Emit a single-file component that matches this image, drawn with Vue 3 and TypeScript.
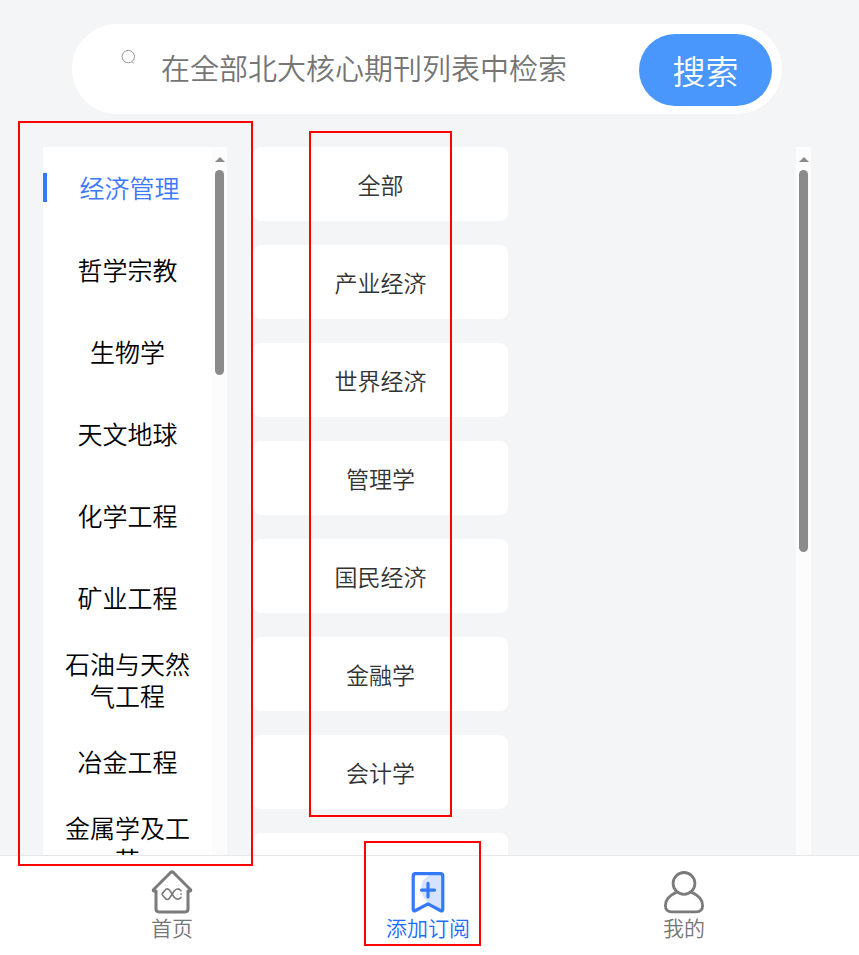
<script setup lang="ts">
import { ref } from 'vue'

const keyword = ref('')
const activeCategory = ref('经济管理')

const categories: string[] = [
  '经济管理',
  '哲学宗教',
  '生物学',
  '天文地球',
  '化学工程',
  '矿业工程',
  '石油与天然气工程',
  '冶金工程',
  '金属学及工艺',
]

const subjects: string[] = [
  '全部',
  '产业经济',
  '世界经济',
  '管理学',
  '国民经济',
  '金融学',
  '会计学',
  '',
]
</script>

<template>
  <div class="page">
    <form class="search" @submit.prevent>
      <svg class="search-icon" viewBox="0 0 16 16" aria-hidden="true">
        <circle cx="8.3" cy="7.6" r="6.2" />
        <path d="M11.8 12.4 L14.2 14.6" />
      </svg>
      <input
        v-model="keyword"
        class="search-input"
        type="text"
        placeholder="在全部北大核心期刊列表中检索"
        aria-label="在全部北大核心期刊列表中检索"
      />
      <button class="search-button" type="submit">搜索</button>
    </form>

    <main class="content">
      <aside class="sidebar">
        <ul class="categories">
          <li v-for="name in categories" :key="name" class="category">
            <button
              type="button"
              class="category-button"
              :class="{ active: name === activeCategory }"
              @click="activeCategory = name"
            >
              {{ name }}
            </button>
          </li>
        </ul>
        <div class="track">
          <span class="arrow"></span>
          <span class="thumb thumb-short"></span>
        </div>
      </aside>

      <section class="subjects">
        <div class="subject-list">
          <button v-for="name in subjects" :key="name" type="button" class="subject">
            {{ name }}
          </button>
        </div>
        <div class="track">
          <span class="arrow"></span>
          <span class="thumb thumb-long"></span>
        </div>
      </section>
    </main>

    <nav class="tabs">
      <a class="tab" href="#home">
        <svg class="tab-icon" viewBox="0 0 44 44" aria-hidden="true">
          <g fill="none" stroke="#7b7b7b" stroke-linecap="round" stroke-linejoin="round">
            <path
              stroke-width="3"
              d="M6 21.5 H3.7 Q2.8 20.9 3.6 20 L20.6 3 Q22 1.8 23.4 3 L40.4 20 Q41.2 20.9 40.3 21.5 H38 V39.5 Q38 42.4 35 42.4 H9 Q6 42.4 6 39.5 Z"
            />
            <path
              stroke-width="1.7"
              d="M31 21.2 C29 18.8 26 18.9 24.2 21.5 L19.6 28.5 C18.2 30.5 16.4 30.5 15 28.5 L12.4 25.5 Q11.8 24.7 12.4 23.9 L15 20.8 C16.4 18.9 18.2 18.9 19.6 20.8 L24.2 27.8 C26 30.2 29 30.2 31 28"
            />
            <path stroke-width="1.6" d="M31 24.6 h.2" />
          </g>
        </svg>
        <span>首页</span>
      </a>
      <a class="tab current" href="#subscribe">
        <svg class="tab-icon" viewBox="0 0 44 44" aria-hidden="true">
          <path fill="#d6e3ff" d="M36 4 V40 L22 32.5 Q15 27.5 15 19 Q15 9 26 4 Z" />
          <g
            fill="none"
            stroke="#3478fb"
            stroke-width="3.2"
            stroke-linecap="round"
            stroke-linejoin="round"
          >
            <path
              d="M9.5 4.2 H34.5 Q36.8 4.2 36.8 6.5 V39.6 Q36.8 42.3 34.4 41 L22 34.4 L9.6 41 Q7.2 42.3 7.2 39.6 V6.5 Q7.2 4.2 9.5 4.2 Z"
            />
            <path d="M15.5 20.6 H28.5 M22 13.8 V27.4" />
          </g>
        </svg>
        <span>添加订阅</span>
      </a>
      <a class="tab" href="#mine">
        <svg class="tab-icon" viewBox="0 0 44 44" aria-hidden="true">
          <g fill="none" stroke="#7b7b7b" stroke-width="2.8">
            <circle cx="22" cy="13.9" r="10.9" />
            <path
              stroke-linejoin="round"
              d="M15.2 22.4 C8 25.5 3.4 30.5 3.4 36 Q3.4 42.4 10 42.4 H34 Q40.6 42.4 40.6 36 C40.6 30.5 36 25.5 28.8 22.4"
            />
          </g>
        </svg>
        <span>我的</span>
      </a>
    </nav>

    <div class="mark mark-categories"></div>
    <div class="mark mark-subjects"></div>
    <div class="mark mark-tab"></div>
  </div>
</template>

<style>
body {
  background: #f3f5f7;
}
</style>

<style scoped>
.page {
  position: relative;
  display: flex;
  flex-direction: column;
  height: 100vh;
  overflow: hidden;
  background: #f3f5f7;
  font-family: 'Noto Sans CJK SC', sans-serif;
  font-weight: 350;
}

button,
input {
  font-family: inherit;
  font-weight: inherit;
  border: 0;
  padding: 0;
  background: none;
}

.search {
  display: flex;
  align-items: flex-start;
  flex: none;
  box-sizing: border-box;
  height: 90px;
  margin: 24px 77px 33px 72px;
  padding: 10px 10px 0 48px;
  border-radius: 45px;
  background: #fff;
}

.search-icon {
  flex: none;
  width: 16px;
  height: 16px;
  margin-top: 15px;
  fill: none;
  stroke: #999;
  stroke-width: 1;
}

.search-input {
  flex: 1;
  min-width: 0;
  height: 66px;
  padding-left: 25px;
  color: #333;
  font-size: 29px;
  outline: 0;
}

.search-input::placeholder {
  color: #757575;
  opacity: 1;
}

.search-button {
  flex: none;
  width: 133px;
  height: 72px;
  border-radius: 36px;
  background: #4997fd;
  color: #fff;
  font-size: 33px;
  line-height: 72px;
}

.content {
  display: flex;
  flex: 1;
  gap: 26px;
  min-height: 0;
  padding: 0 48px 0 43px;
}

.sidebar {
  display: flex;
  flex: none;
  width: 184px;
  overflow: hidden;
  background: #fff;
}

.categories {
  flex: 1;
  margin: 0;
  padding: 0;
  list-style: none;
}

.category {
  display: flex;
  align-items: center;
  box-sizing: border-box;
  height: 82px;
  padding-bottom: 2px;
}

.category-button {
  width: 100%;
  padding: 0 20px;
  color: #000;
  font-size: 25px;
  line-height: 32px;
}

.category-button.active {
  border-left: 4px solid #3478fb;
  color: #3d78ff;
  line-height: 29px;
}

.track {
  display: flex;
  flex: none;
  flex-direction: column;
  align-items: center;
  width: 15px;
  background: #fcfcfc;
}

.arrow {
  margin-top: 10px;
  border: 5px solid transparent;
  border-top-width: 0;
  border-bottom-color: #8b8b8b;
}

.thumb {
  width: 9px;
  margin-top: 8px;
  border-radius: 5px;
  background: #8b8b8b;
}

.thumb-short {
  height: 29%;
}

.thumb-long {
  height: 54%;
}

.subjects {
  display: flex;
  flex: 1;
  min-width: 0;
  overflow: hidden;
}

.subject-list {
  display: flex;
  flex: 1;
  flex-direction: column;
  gap: 24px;
}

.subject {
  flex: none;
  width: 47%;
  height: 74px;
  border-radius: 8px;
  background: #fff;
  color: #333;
  font-size: 23px;
}

.tabs {
  display: grid;
  grid-template-columns: repeat(3, 1fr);
  flex: none;
  box-sizing: border-box;
  height: 100px;
  padding: 13px 47px 0 44px;
  border-top: 1px solid #e6e7e9;
  background: #fff;
}

.tab {
  display: flex;
  flex-direction: column;
  align-items: center;
  color: #757575;
  font-size: 21px;
  line-height: 27px;
  text-decoration: none;
}

.tab.current {
  color: #1a6dff;
}

.tab-icon {
  width: 44px;
  height: 45px;
}

.mark {
  position: absolute;
  box-sizing: border-box;
  border: 2px solid #f00;
  pointer-events: none;
}

.mark-categories {
  top: 121px;
  left: 18px;
  width: 235px;
  height: 745px;
}

.mark-subjects {
  top: 131px;
  left: 309px;
  width: 143px;
  height: 686px;
}

.mark-tab {
  top: 841px;
  left: 364px;
  width: 117px;
  height: 105px;
}
</style>
